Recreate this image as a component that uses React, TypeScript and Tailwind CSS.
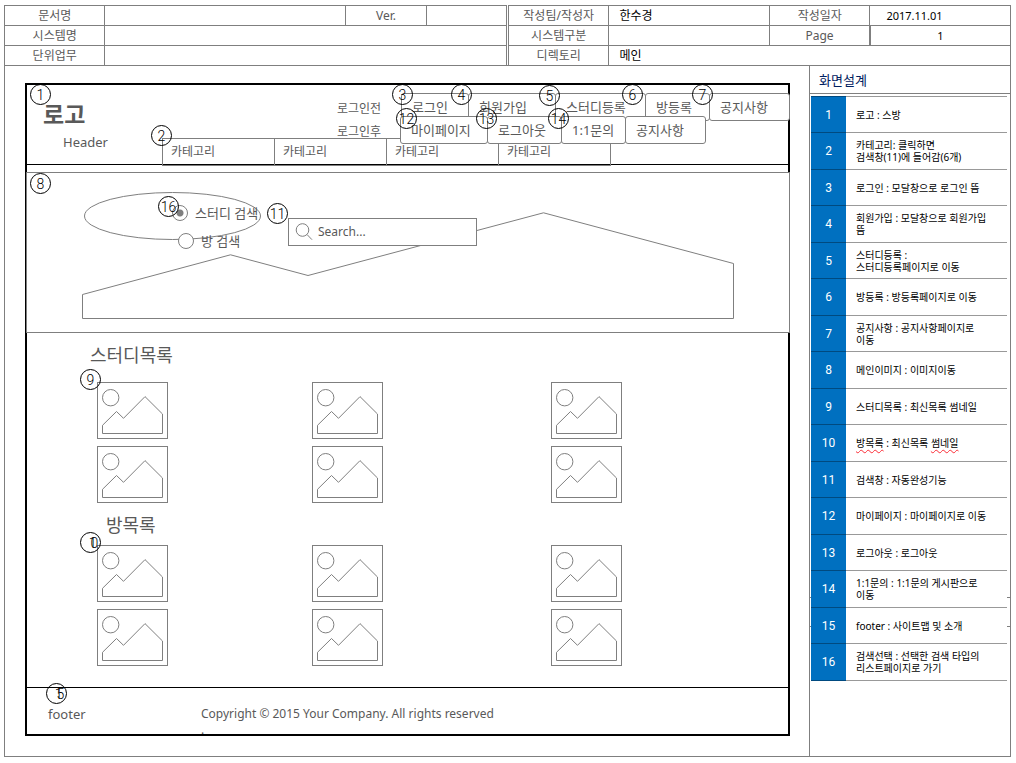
import type { ReactNode } from "react";

const LINE = "#7f7f7f";

const markers: { label: string; place: string }[] = [
  { label: "1", place: "left-[3px] -top-px" },
  { label: "2", place: "left-[124px] top-[40px]" },
  { label: "3", place: "left-[365px] -top-px" },
  { label: "4", place: "left-[424px] -top-px" },
  { label: "5", place: "left-[512px] top-0" },
  { label: "6", place: "left-[595px] -top-px" },
  { label: "7", place: "left-[665px] -top-px" },
  { label: "12", place: "left-[369px] top-[23px]" },
  { label: "13", place: "left-[449px] top-[23px]" },
  { label: "14", place: "left-[521px] top-[23px]" },
  { label: "8", place: "left-[3px] top-[88px]" },
  { label: "16", place: "left-[131px] top-[111px]" },
  { label: "11", place: "left-[240px] top-[118px]" },
  { label: "9", place: "left-[53px] top-[284px]" },
];

const notes: ReactNode[] = [
  "로고 : 스방",
  "카테고리: 클릭하면\n검색창(11)에 들어감(6개)",
  "로그인 : 모달창으로 로그인 뜸",
  "회원가입 : 모달창으로 회원가입\n뜸",
  "스터디등록 :\n스터디등록페이지로 이동",
  "방등록 : 방등록페이지로 이동",
  "공지사항 : 공지사항페이지로\n이동",
  "메인이미지 : 이미지이동",
  "스터디목록 : 최신목록 썸네일",
  <>
    <Misspelt>방목록</Misspelt> : 최신목록 <Misspelt>썸네일</Misspelt>
  </>,
  "검색창 : 자동완성기능",
  "마이페이지 : 마이페이지로 이동",
  "로그아웃 : 로그아웃",
  "1:1문의 : 1:1문의 게시판으로\n이동",
  "footer : 사이트맵 및 소개",
  "검색선택 : 선택한 검색 타입의\n리스트페이지로 가기",
];

function Misspelt({ children }: { children: ReactNode }) {
  return (
    <span className="underline decoration-red-500 decoration-wavy decoration-1 underline-offset-2">
      {children}
    </span>
  );
}

function Marker({ place, children }: { place: string; children: ReactNode }) {
  return (
    <span
      className={`absolute z-20 flex size-[21px] items-center justify-center rounded-full border border-black font-['Roboto',sans-serif] text-[14px] leading-none font-light text-black ${place}`}
    >
      {children}
    </span>
  );
}

function StackedDigits({ first, second }: { first: string; second: string }) {
  return (
    <span className="ml-1.5 flex">
      <span>{first}</span>
      <span className="-ml-1.5">{second}</span>
    </span>
  );
}

function NavButton({ width, children }: { width: string; children: ReactNode }) {
  return (
    <button
      type="button"
      className={`-ml-px h-7 shrink-0 rounded-[3px] border border-[#7f7f7f] bg-white pl-2.5 text-left text-[13px] leading-5 whitespace-nowrap ${width}`}
    >
      {children}
    </button>
  );
}

function Thumbnail() {
  return (
    <svg className="h-[57px] w-[71px]" viewBox="0 0 71 57" fill="none" stroke={LINE} role="img">
      <rect x="0.5" y="0.5" width="70" height="56" />
      <circle cx="13.7" cy="15.7" r="8.2" />
      <path d="M5.5 43.3 19.5 29.5 26.5 36.3 48 14.6 65.5 32V51.5H5.5Z" />
    </svg>
  );
}

function ThumbnailGrid() {
  return (
    <div className="grid grid-cols-[215fr_239fr_237fr] gap-y-[7px] pl-[70px]">
      {[0, 1, 2, 3, 4, 5].map((i) => (
        <Thumbnail key={i} />
      ))}
    </div>
  );
}

const cell = "h-5 border border-[#7f7f7f] p-0 text-[12px] leading-4 font-normal";

function MetaTables() {
  return (
    <div className="grid grid-cols-2 gap-px">
      <table className="w-full table-fixed border-collapse text-center">
        <colgroup>
          <col className="w-[20%]" />
          <col className="w-[48%]" />
          <col className="w-[16%]" />
          <col className="w-[16%]" />
        </colgroup>
        <tbody>
          <tr>
            <th className={cell}>문서명</th>
            <td className={cell} />
            <th className={cell}>Ver.</th>
            <td className={cell} />
          </tr>
          <tr>
            <th className={cell}>시스템명</th>
            <td className={cell} colSpan={3} />
          </tr>
          <tr>
            <th className={cell}>단위업무</th>
            <td className={cell} colSpan={3} />
          </tr>
        </tbody>
      </table>
      <table className="w-full table-fixed border-collapse text-center">
        <colgroup>
          <col className="w-[20%]" />
          <col className="w-[32%]" />
          <col className="w-[20%]" />
          <col className="w-[28%]" />
        </colgroup>
        <tbody>
          <tr>
            <th className={cell}>작성팀/작성자</th>
            <td className={`${cell} text-left text-black`}>
              <span className="pl-2.5">한수경</span>
            </td>
            <th className={cell}>작성일자</th>
            <td className={`${cell} text-left text-black`}>
              <span className="pl-4 text-[11px]">2017.11.01</span>
            </td>
          </tr>
          <tr>
            <th className={cell}>시스템구분</th>
            <td className={cell} />
            <th className={cell}>Page</th>
            <td className={`${cell} border-l-2 text-black`}>
              <span className="text-[11px]">1</span>
            </td>
          </tr>
          <tr>
            <th className={cell}>디렉토리</th>
            <td className={`${cell} text-left text-black`} colSpan={3}>
              <span className="pl-2.5">메인</span>
            </td>
          </tr>
        </tbody>
      </table>
    </div>
  );
}

function SiteHeader() {
  return (
    <header className="flex h-20 border-b border-black">
      <div className="w-[135px] shrink-0 pt-[15px]">
        <h1 className="pl-4 text-[23px] leading-7 font-bold">로고</h1>
        <p className="pt-1 pl-9 text-[13px] leading-5">Header</p>
      </div>
      <div className="min-w-0 grow pt-2">
        <div className="flex items-center pl-[175px]">
          <span className="w-[65px] shrink-0 pt-[3px] text-[12px] leading-4">로그인전</span>
          <nav className="flex">
            <NavButton width="w-[68px]">로그인</NavButton>
            <NavButton width="w-[88px]">회원가입</NavButton>
            <NavButton width="w-[91px]">스터디등록</NavButton>
            <NavButton width="w-[65px]">방등록</NavButton>
            <NavButton width="w-[81px]">공지사항</NavButton>
          </nav>
        </div>
        <div className="relative z-10 -mt-[5px] flex items-center pl-[175px]">
          <span className="w-16 shrink-0 pt-[3px] text-[12px] leading-4">로그인후</span>
          <nav className="flex">
            <NavButton width="w-[88px]">마이페이지</NavButton>
            <NavButton width="w-[75px]">로그아웃</NavButton>
            <NavButton width="w-[65px]">1:1문의</NavButton>
            <NavButton width="w-[81px]">공지사항</NavButton>
          </nav>
        </div>
        <ul className="-mt-[6px] flex">
          {[0, 1, 2, 3].map((i) => (
            <li
              key={i}
              className="-mr-px h-7 w-[113px] border border-[#7f7f7f] pt-[5px] pl-2 text-[12px] leading-4"
            >
              <a href="#category">카테고리</a>
            </li>
          ))}
        </ul>
      </div>
    </header>
  );
}

const radio =
  "size-4 appearance-none rounded-full border border-[#7f7f7f] bg-white checked:bg-[radial-gradient(circle,#7f7f7f_3px,#ffffff_4px)]";

function Hero() {
  return (
    <section className="relative mt-[7px] -mr-0.5 -ml-px h-[161px] border border-[#7f7f7f] bg-white">
      <svg
        className="absolute inset-0 h-full w-full"
        viewBox="0 0 762 159"
        preserveAspectRatio="none"
        fill="none"
        stroke={LINE}
        aria-hidden="true"
      >
        <path d="M55.5 121.5 203.5 81.8 281 102.5 516.5 39.8 706.5 90.5V145.5H55.5Z" />
        <ellipse cx="145.5" cy="43" rx="88" ry="23.5" />
      </svg>
      <form className="relative flex items-start pt-[30px] pl-[145px]">
        <fieldset className="flex w-[116px] flex-col gap-2 text-[13px] leading-5 whitespace-nowrap">
          <label className="flex items-center gap-[7px]">
            <input type="radio" name="target" defaultChecked className={radio} />
            스터디 검색
          </label>
          <label className="flex items-center gap-[7px] pl-1.5">
            <input type="radio" name="target" className={radio} />방 검색
          </label>
        </fieldset>
        <label className="mt-[15px] flex h-7 w-[189px] items-center border border-[#7f7f7f] bg-white pl-1.5">
          <svg className="size-[18px] shrink-0" viewBox="0 0 18 18" fill="none" stroke={LINE} aria-hidden="true">
            <circle cx="7.5" cy="7" r="6.3" />
            <path d="M12 11.5 17 16.7" />
          </svg>
          <input
            type="text"
            aria-label="Search"
            placeholder="Search..."
            className="ml-[5px] w-full min-w-0 bg-transparent text-[12px] leading-5 outline-none placeholder:text-[#595959]"
          />
        </label>
      </form>
    </section>
  );
}

function Wireframe() {
  return (
    <div className="relative border-2 border-black">
      <SiteHeader />
      <Hero />
      <section>
        <h2 className="pt-2.5 pb-[15px] pl-[63px] text-[18px] leading-6">스터디목록</h2>
        <ThumbnailGrid />
      </section>
      <section className="pb-[21px]">
        <h2 className="pt-2.5 pb-2 pl-[79px] text-[18px] leading-6">방목록</h2>
        <ThumbnailGrid />
      </section>
      <footer className="flex h-[47px] border-t border-black pt-[18px] pl-[21px] text-[13px] leading-4">
        <span className="w-[153px] shrink-0">footer</span>
        <p className="text-[12px] leading-4">
          Copyright © 2015 Your Company. All rights reserved
          <br />.
        </p>
      </footer>
      {markers.map((m) => (
        <Marker key={m.label} place={m.place}>
          {m.label}
        </Marker>
      ))}
      <Marker place="left-[53px] top-[447px]">
        <StackedDigits first="1" second="0" />
      </Marker>
      <Marker place="left-[19px] top-[598px]">
        <StackedDigits first="1" second="5" />
      </Marker>
    </div>
  );
}

function NotesPanel() {
  return (
    <aside className="relative w-[201px] shrink-0 border-l border-[#7f7f7f]">
      <h2 className="border-b border-[#7f7f7f] pt-1 pb-[3px] pl-[9px] text-[13px] leading-5 font-normal text-[#002060]">
        화면설계
      </h2>
      <span className="absolute inset-x-0 top-[531px] h-px bg-[#7f7f7f]" />
      <span className="absolute inset-x-0 top-[560px] h-px bg-[#7f7f7f]" />
      <div className="relative mt-0.5 mr-[3px] ml-px bg-white">
        <table className="w-full table-fixed border-collapse">
          <colgroup>
            <col className="w-[35px]" />
            <col />
          </colgroup>
          <tbody>
            {notes.map((note, i) => (
              <tr key={i} className="odd:h-9 even:h-[37px]">
                <th className="border-y border-[#004a80] bg-[#0070c0] p-0 text-center font-['Roboto',sans-serif] text-[12px] leading-3 font-normal text-white">
                  {i + 1}
                </th>
                <td className="border-y border-[#999999] py-0 pr-0 pl-2.5 text-[10px] leading-3 whitespace-pre-line text-black">
                  {note}
                </td>
              </tr>
            ))}
          </tbody>
        </table>
      </div>
    </aside>
  );
}

export default function App() {
  return (
    <div className="min-h-screen bg-white pt-[5px] pr-[5px] pb-1.5 pl-1 font-['Noto_Sans','Noto_Sans_CJK_KR',sans-serif] text-[#595959]">
      <MetaTables />
      <div className="-mt-px flex border border-[#7f7f7f]">
        <main className="min-w-0 grow pt-[17px] pr-[19px] pb-5 pl-5">
          <Wireframe />
        </main>
        <NotesPanel />
      </div>
    </div>
  );
}
